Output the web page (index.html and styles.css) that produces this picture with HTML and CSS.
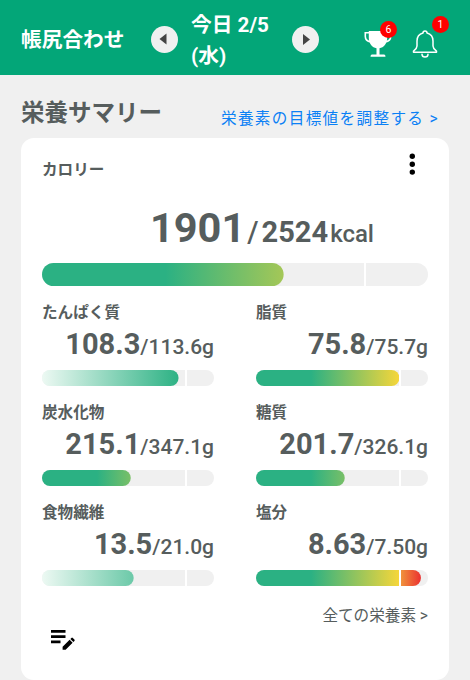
FILE: index.html
```html
<!DOCTYPE html>
<html lang="ja">

<head>
    <meta charset="UTF-8">
    <meta name="viewport" content="width=device-width, initial-scale=1.0">
    <title>栄養サマリー</title>
    <link rel="stylesheet" href="styles.css">
</head>

<body>
    <header class="header">
        <h1 class="header-title">帳尻合わせ</h1>
        <button class="day-btn" aria-label="前の日">
            <svg width="27" height="27" viewBox="0 0 27 27"><path d="M8.500 13L15.500 7.500v11z" fill="#444"/></svg>
        </button>
        <div class="date">今日 2/5<br>(水)</div>
        <button class="day-btn" aria-label="次の日">
            <svg width="27" height="27" viewBox="0 0 27 27"><path d="M18 13.500L11 8v11z" fill="#444"/></svg>
        </button>
        <div class="icon trophy">
            <svg width="28" height="28" viewBox="0 0 28 28">
                <path d="M4.800 1h18.400v7c0 5.500-3.500 9.500-7.700 10.300V24.500H20q1.500 0 1.500 2.200h-15q0-2.200 1.500-2.200h4.500v-6.200C8.300 17.500 4.800 13.500 4.800 8z" fill="#fff"/>
                <path d="M5 2.800H1.300v3.700q0 4.500 5.500 5.500M23 2.800h3.700v3.700q0 4.500-5.500 5.500" fill="none" stroke="#fff" stroke-width="1.600"/>
            </svg>
            <span class="badge">6</span>
        </div>
        <div class="icon bell">
            <svg width="26" height="28" viewBox="0 0 26 28" fill="none" stroke="#fff" stroke-width="1.500" stroke-linecap="round" stroke-linejoin="round">
                <path d="M11 3a2 2 0 0 1 4 0c4 1 6 4 6 8v5c0 2.500 1.500 3.500 3.500 5v1.300h-23v-1.300c2-1.500 3.500-2.500 3.500-5v-5c0-4 2-7 6-8z"/>
                <path d="M10 24.200c0 3.700 6 3.700 6 0"/>
            </svg>
            <span class="badge">1</span>
        </div>
    </header>

    <main>
        <div class="heading">
            <h2>栄養サマリー</h2>
            <a href="#">栄養素の目標値を調整する &gt;</a>
        </div>

        <section class="card">
            <div class="card-top">
                <h3>カロリー</h3>
                <svg class="more" width="6" height="24" viewBox="0 0 6 24"><circle cx="3.300" cy="4.300" r="2.700"/><circle cx="3.300" cy="12.200" r="2.700"/><circle cx="3.300" cy="20.100" r="2.700"/></svg>
            </div>

            <div class="calories"><b>1901</b><i>/</i><strong>2524</strong><span>kcal</span></div>
            <div class="bar bar-large"><div class="fill" style="--value: 62.600%"></div></div>

            <div class="nutrients">
                <div class="nutrient">
                    <h3>たんぱく質</h3>
                    <p><b>108.3</b>/113.6g</p>
                    <div class="bar"><div class="fill fill-soft" style="--value: 79.400%"></div></div>
                </div>
                <div class="nutrient">
                    <h3>脂質</h3>
                    <p><b>75.8</b>/75.7g</p>
                    <div class="bar"><div class="fill" style="--value: 83.400%"></div></div>
                </div>
                <div class="nutrient">
                    <h3>炭水化物</h3>
                    <p><b>215.1</b>/347.1g</p>
                    <div class="bar"><div class="fill" style="--value: 51.600%"></div></div>
                </div>
                <div class="nutrient">
                    <h3>糖質</h3>
                    <p><b>201.7</b>/326.1g</p>
                    <div class="bar"><div class="fill" style="--value: 51.600%"></div></div>
                </div>
                <div class="nutrient">
                    <h3>食物繊維</h3>
                    <p><b>13.5</b>/21.0g</p>
                    <div class="bar"><div class="fill fill-soft" style="--value: 53.300%"></div></div>
                </div>
                <div class="nutrient">
                    <h3>塩分</h3>
                    <p><b>8.63</b>/7.50g</p>
                    <div class="bar"><div class="fill" style="--value: 95.900%"></div></div>
                </div>
            </div>

            <a class="all" href="#">全ての栄養素 &gt;</a>
            <svg class="edit" width="26" height="22" viewBox="0 0 26 22">
                <path d="M1 1h14.500v2.700H1zM1 6.300h14.500V9H1zM1 11.500h9.500v2.700H1z"/>
                <path d="M12.600 17.700l7-7 3 3-7 7h-3zM20.400 9.900l1-1q.7-.7 1.400 0l1.600 1.600q.7.7 0 1.400l-1 1z"/>
            </svg>
        </section>
    </main>
</body>

</html>
```

FILE: styles.css
```css
* {
    margin: 0;
    padding: 0;
    box-sizing: border-box;
}

body {
    background: #f0f0f0;
    color: #565d5d;
    font-family: Roboto, "Noto Sans CJK JP", sans-serif;
}

a {
    text-decoration: none;
}

.header {
    display: flex;
    align-items: center;
    height: 75px;
    padding-left: 21px;
    padding-top: 3px;
    background: #03a678;
    color: #fff;
}

.header-title {
    width: 130px;
    padding-top: 2px;
    font-size: 20.7px;
    line-height: 30px;
    font-weight: 700;
}

.day-btn {
    width: 27px;
    height: 27px;
    border: none;
    border-radius: 50%;
    background: #f0f0f0;
}

.day-btn svg {
    display: block;
}

.date {
    width: 101px;
    margin-left: 13px;
    padding-top: 3px;
    font-size: 20.7px;
    line-height: 31px;
    font-weight: 700;
}

.icon {
    position: relative;
    height: 28px;
    margin-top: 9px;
}

.icon svg {
    display: block;
}

.trophy {
    margin-left: 45px;
}

.bell {
    margin-left: 20px;
}

.badge {
    position: absolute;
    top: -9px;
    right: -5px;
    width: 17px;
    height: 17px;
    border-radius: 50%;
    background: #f00;
    font-size: 10.500px;
    line-height: 17px;
    text-align: center;
}

.bell .badge {
    top: -14px;
    right: -11px;
}

.heading {
    display: flex;
    justify-content: space-between;
    height: 63px;
    padding: 21px 31px 0 21px;
}

.heading h2 {
    font-size: 23.500px;
    line-height: 35px;
    font-weight: 700;
}

.heading a {
    padding-top: 11px;
    color: #0b80f5;
    font-size: 15.600px;
    line-height: 24px;
    letter-spacing: 1.350px;
}

.card {
    display: flex;
    flex-direction: column;
    height: 542px;
    margin: 0 21px;
    padding: 13px 21px 0;
    border-radius: 13px;
    background: #fff;
}

.card h3 {
    font-size: 15.600px;
    line-height: 26px;
    font-weight: 700;
}

.card-top {
    display: flex;
    justify-content: space-between;
    height: 50px;
    padding-top: 6px;
}

.more {
    margin-top: -5px;
    margin-right: 13px;
}

.calories {
    display: flex;
    align-items: baseline;
    justify-content: flex-end;
    height: 62px;
    padding-right: 54px;
    line-height: 54px;
}

.calories b {
    font-size: 41.500px;
}

.calories i {
    margin: 0 3px 0 2px;
    font-size: 29px;
    font-style: normal;
    font-weight: 500;
}

.calories strong {
    font-size: 29px;
}

.calories span {
    margin-left: 2px;
    font-size: 24px;
    font-weight: 500;
}

.bar {
    position: relative;
    height: 16px;
    border-radius: 12px;
    background: #f0f0f0;
}

.bar-large {
    height: 23px;
}

/* marks the daily target */
.bar::after {
    content: "";
    position: absolute;
    top: 0;
    left: 83.300%;
    width: 2px;
    height: 100%;
    background: #fff;
}

.fill {
    height: 100%;
    background: linear-gradient(to right, #2bb183 32%, #f5d63a 83%, #f0953c 84%, #eb3030 96%);
    clip-path: inset(0 calc(100% - var(--value)) 0 0 round 12px);
}

.fill-soft {
    background: linear-gradient(to right, #edf9f3, #2bb183 80%);
}

.nutrients {
    display: grid;
    grid-template-columns: 1fr 1fr;
    column-gap: 42px;
    margin-top: 14px;
}

.nutrient {
    height: 100px;
}

.nutrient p {
    height: 44px;
    font-size: 21px;
    line-height: 36px;
    font-weight: 500;
    text-align: right;
}

.nutrient b {
    font-size: 29px;
}

.all {
    align-self: flex-end;
    margin-top: 4px;
    color: #565d5d;
    font-size: 15.600px;
    line-height: 24px;
}

.edit {
    margin: 1px 0 0 8px;
}
```
